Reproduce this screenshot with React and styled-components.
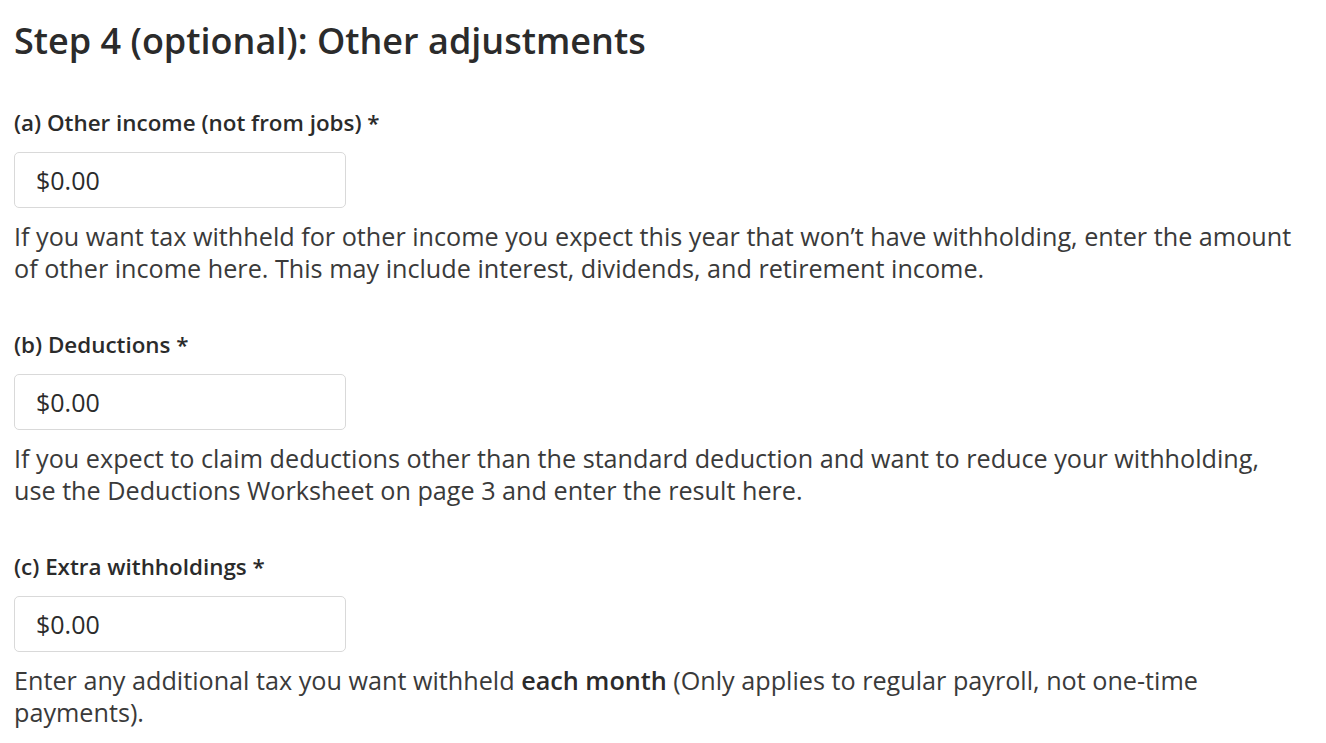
import React from "react";
import styled, { createGlobalStyle } from "styled-components";

const Global = createGlobalStyle`
  html, body { margin: 0; padding: 0; background: #fff; }
  body { font-family: "Open Sans", "Noto Sans", sans-serif; color: #333; }
`;

const Page = styled.div`
  padding: 17px 14px 0;
  display: flex;
  flex-direction: column;
`;

const Title = styled.h2`
  margin: 0 0 43px;
  font-size: 36px;
  font-weight: 600;
  line-height: 48px;
  color: #2b2b2b;
`;

const Field = styled.div`
  display: flex;
  flex-direction: column;
  margin-bottom: 46px;
`;

const Label = styled.label`
  font-size: 22.4px;
  font-weight: 600;
  line-height: 30px;
  color: #2b2b2b;
  margin-bottom: 14px;
`;

const Input = styled.input`
  box-sizing: border-box;
  width: 332px;
  height: 56px;
  border: 1px solid #d9d9d9;
  border-radius: 5px;
  padding: 0 21px;
  font-family: "Open Sans", "Noto Sans", sans-serif;
  font-size: 25px;
  color: #2b2b2b;
  outline: none;
  margin-bottom: 12px;
`;

const Help = styled.p`
  margin: 0;
  font-size: 25.2px;
  line-height: 32px;
  color: #3a3a3a;
  max-width: 1280px;

  b { font-weight: 600; color: #2b2b2b; }
`;

const fields = [
  {
    id: "a",
    label: "(a) Other income (not from jobs) *",
    help: <>If you want tax withheld for other income you expect this year that won’t have withholding, enter the amount of other income here. This may include interest, dividends, and retirement income.</>,
  },
  {
    id: "b",
    label: "(b) Deductions *",
    help: <>If you expect to claim deductions other than the standard deduction and want to reduce your withholding, use the Deductions Worksheet on page 3 and enter the result here.</>,
  },
  {
    id: "c",
    label: "(c) Extra withholdings *",
    help: <>Enter any additional tax you want withheld <b>each month</b> (Only applies to regular payroll, not one-time payments).</>,
  },
];

export default function App() {
  return (
    <>
      <Global />
      <Page>
        <Title>Step 4 (optional): Other adjustments</Title>
        {fields.map((f) => (
          <Field key={f.id}>
            <Label htmlFor={f.id}>{f.label}</Label>
            <Input id={f.id} defaultValue="$0.00" />
            <Help>{f.help}</Help>
          </Field>
        ))}
      </Page>
    </>
  );
}
